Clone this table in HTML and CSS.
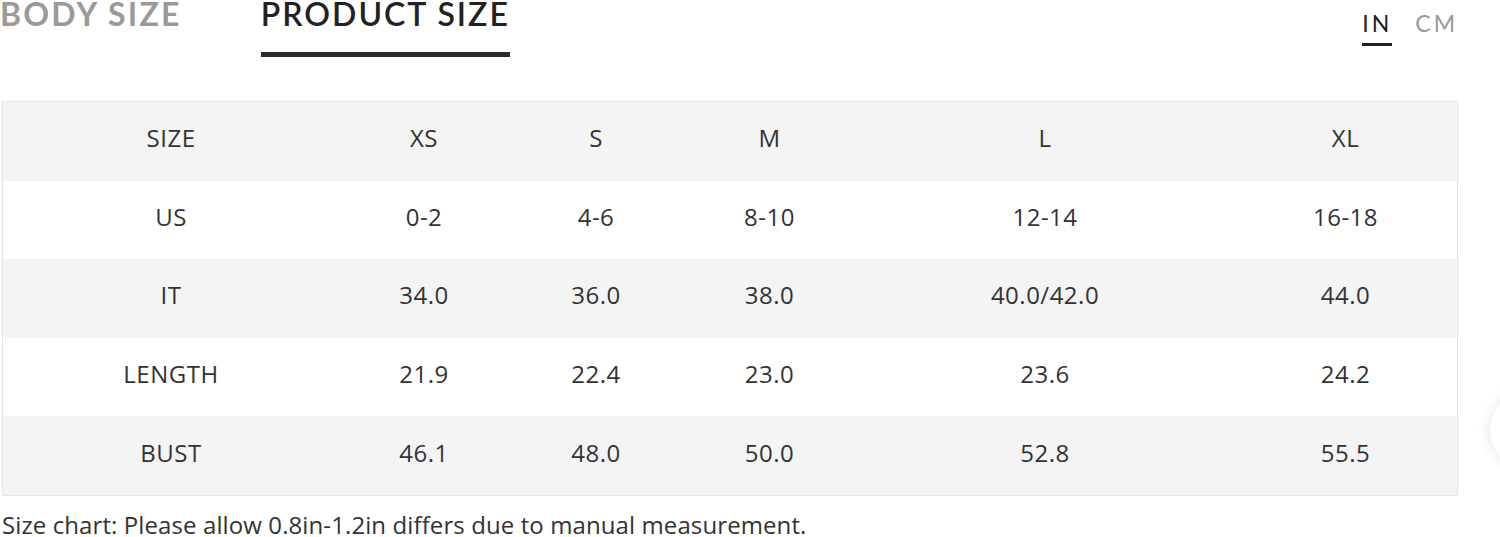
FILE: index.html
```html
<!DOCTYPE html>
<html lang="en">
<head>
<meta charset="utf-8">
<title>Size chart</title>
<link rel="stylesheet" href="styles.css">
</head>
<body>
<div class="page">
  <div class="topbar">
    <div class="tabs">
      <div class="tab">BODY SIZE</div>
      <div class="tab active">PRODUCT SIZE</div>
    </div>
    <div class="units">
      <span class="unit active">IN</span>
      <span class="unit">CM</span>
    </div>
  </div>
  <div class="chart">
    <div class="row shade">
      <div class="cell">SIZE</div><div class="cell">XS</div><div class="cell">S</div><div class="cell">M</div><div class="cell">L</div><div class="cell">XL</div>
    </div>
    <div class="row">
      <div class="cell">US</div><div class="cell">0-2</div><div class="cell">4-6</div><div class="cell">8-10</div><div class="cell">12-14</div><div class="cell">16-18</div>
    </div>
    <div class="row shade">
      <div class="cell">IT</div><div class="cell">34.0</div><div class="cell">36.0</div><div class="cell">38.0</div><div class="cell">40.0/42.0</div><div class="cell">44.0</div>
    </div>
    <div class="row">
      <div class="cell">LENGTH</div><div class="cell">21.9</div><div class="cell">22.4</div><div class="cell">23.0</div><div class="cell">23.6</div><div class="cell">24.2</div>
    </div>
    <div class="row shade">
      <div class="cell">BUST</div><div class="cell">46.1</div><div class="cell">48.0</div><div class="cell">50.0</div><div class="cell">52.8</div><div class="cell">55.5</div>
    </div>
  </div>
  <p class="note">Size chart: Please allow 0.8in-1.2in differs due to manual measurement.</p>
  <div class="floater"></div>
</div>
</body>
</html>
```

FILE: styles.css
```css
html, body {
  margin: 0;
  padding: 0;
  background: #ffffff;
}
body {
  width: 1500px;
  height: 537px;
  overflow: hidden;
}
.page {
  position: relative;
  height: 537px;
}
.topbar {
  display: flex;
  justify-content: space-between;
  align-items: flex-start;
  width: 1458px;
  height: 57px;
  margin-bottom: 44px;
}
.tabs {
  display: flex;
  gap: 79px;
}
.tab {
  font-family: "Lato", "Liberation Sans", sans-serif;
  font-weight: 700;
  font-size: 32px;
  line-height: 28px;
  color: #9a9a9a;
  letter-spacing: 2.2px;
  padding-bottom: 24px;
}
.tab.active {
  color: #222222;
  font-weight: 600;
  letter-spacing: 2px;
  border-bottom: 5px solid #2b2b2b;
}
.units {
  display: flex;
  gap: 26px;
  padding-top: 10px;
}
.unit {
  font-family: "Lato", "Liberation Sans", sans-serif;
  font-size: 23px;
  line-height: 26px;
  letter-spacing: 3px;
  color: #9a9a9a;
  padding-bottom: 7px;
}
.unit.active {
  color: #222222;
  border-bottom: 3px solid #222222;
  margin-right: -3px;
}
.chart {
  margin-left: 2px;
  width: 1456px;
  border: 1px solid #e6e6e6;
  box-sizing: border-box;
}
.row {
  display: grid;
  grid-template-columns: 336px 170px 174px 173px 378px 223px;
  height: 78.6px;
  align-items: center;
  background: #ffffff;
}
.row.shade {
  background: #f4f4f4;
}
.cell {
  text-align: center;
  font-family: "Open Sans", "Liberation Sans", sans-serif;
  font-size: 24px;
  line-height: 30px;
  letter-spacing: 0.5px;
  color: #333333;
  padding-bottom: 6px;
}
.note {
  margin: 17px 0 0 2px;
  font-family: "Open Sans", "Liberation Sans", sans-serif;
  font-size: 24px;
  line-height: 24px;
  color: #333333;
  letter-spacing: 0.1px;
}
.floater {
  position: absolute;
  left: 1490px;
  top: 395px;
  width: 60px;
  height: 70px;
  border-radius: 50%;
  box-shadow: 0 0 14px rgba(0, 0, 0, 0.12);
  background: #ffffff;
}
```
